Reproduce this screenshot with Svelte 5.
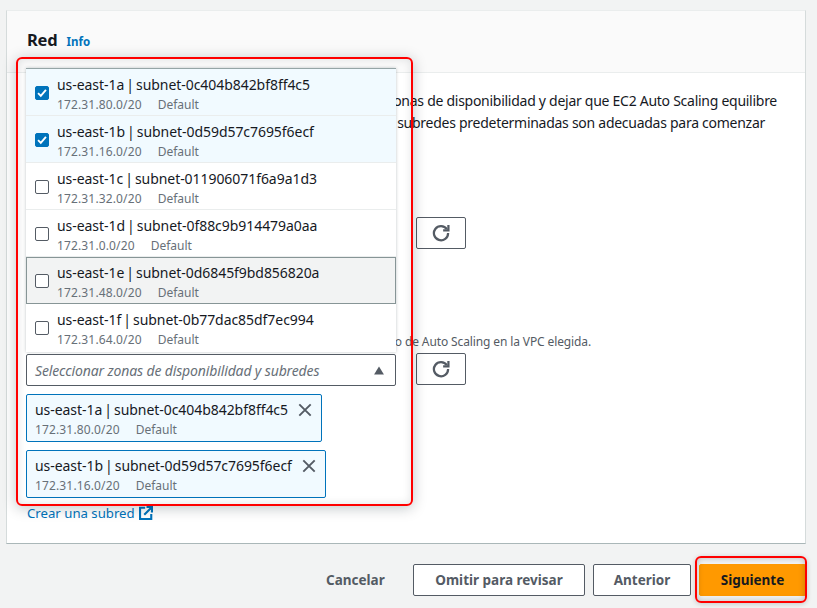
<script>
  const options = [
    { zone: 'us-east-1a', id: 'subnet-0c404b842bf8ff4c5', cidr: '172.31.80.0/20', checked: true },
    { zone: 'us-east-1b', id: 'subnet-0d59d57c7695f6ecf', cidr: '172.31.16.0/20', checked: true },
    { zone: 'us-east-1c', id: 'subnet-011906071f6a9a1d3', cidr: '172.31.32.0/20' },
    { zone: 'us-east-1d', id: 'subnet-0f88c9b914479a0aa', cidr: '172.31.0.0/20' },
    { zone: 'us-east-1e', id: 'subnet-0d6845f9bd856820a', cidr: '172.31.48.0/20', hover: true },
    { zone: 'us-east-1f', id: 'subnet-0b77dac85df7ec994', cidr: '172.31.64.0/20' }
  ];
  const selected = options.filter((o) => o.checked);
</script>

<div class="page">
  <section class="card">
    <header class="head">
      <h2>Red</h2>
      <a class="info" href="#info">Info</a>
    </header>
    <div class="body">
      <p class="line first">zonas de disponibilidad y dejar que EC2 Auto Scaling equilibre</p>
      <p class="line second">las subredes predeterminadas son adecuadas para comenzar</p>
      <div class="refresh-row one">
        <button class="refresh" aria-label="Actualizar">
          <svg viewBox="0 0 16 16" width="18" height="18"><path d="M13.2 4.6A6.3 6.3 0 1 0 14.3 8" fill="none" stroke="#545b64" stroke-width="2"/><path d="M14.6 0.9v4.7H9.9" fill="none" stroke="#545b64" stroke-width="2"/></svg>
        </button>
      </div>
      <p class="hint">grupo de Auto Scaling en la VPC elegida.</p>
      <div class="refresh-row two">
        <button class="refresh" aria-label="Actualizar">
          <svg viewBox="0 0 16 16" width="18" height="18"><path d="M13.2 4.6A6.3 6.3 0 1 0 14.3 8" fill="none" stroke="#545b64" stroke-width="2"/><path d="M14.6 0.9v4.7H9.9" fill="none" stroke="#545b64" stroke-width="2"/></svg>
        </button>
      </div>
      <a class="create" href="#crear">Crear una subred
        <svg viewBox="0 0 16 16" width="14" height="14"><path d="M7 2H1.2v12.8H14V9" fill="none" stroke="#0073bb" stroke-width="2.4"/><path d="M6 10l8-8M8.6 1.2h6.2v6.2" fill="none" stroke="#0073bb" stroke-width="2.4"/></svg>
      </a>
    </div>

    <div class="popover">
      <ul class="list">
        {#each options as o}
          <li class="option" class:checked={o.checked} class:hover={o.hover}>
            <span class="box">
              {#if o.checked}
                <svg viewBox="0 0 14 14" width="12" height="12"><path d="M2.4 7.2l3.2 3.2 6-7" fill="none" stroke="#fff" stroke-width="2.2"/></svg>
              {/if}
            </span>
            <span class="label">
              <span class="name">{o.zone} | {o.id}</span>
              <span class="meta"><span class="cidr">{o.cidr}</span><span>Default</span></span>
            </span>
          </li>
        {/each}
      </ul>
      <div class="select">
        <span>Seleccionar zonas de disponibilidad y subredes</span>
        <svg viewBox="0 0 12 10" width="12" height="9"><path d="M6 0.5L11.5 9.5H0.5z" fill="#545b64"/></svg>
      </div>
      {#each selected as o}
        <div class="token">
          <span class="label">
            <span class="name">{o.zone} | {o.id}</span>
            <span class="meta"><span class="cidr">{o.cidr}</span><span>Default</span></span>
          </span>
          <svg viewBox="0 0 16 16" width="14" height="14"><path d="M1.5 1.5l13 13M14.5 1.5l-13 13" fill="none" stroke="#545b64" stroke-width="2.2"/></svg>
        </div>
      {/each}
    </div>
    <div class="mark"></div>
  </section>

  <footer class="actions">
    <button class="link">Cancelar</button>
    <button class="btn skip">Omitir para revisar</button>
    <button class="btn prev">Anterior</button>
    <button class="primary">Siguiente</button>
  </footer>
</div>

<style>
  :global(body) { margin: 0; background: #f2f3f3; }
  .page {
    width: 817px; height: 608px; box-sizing: border-box; overflow: hidden;
    padding: 10px 11px 0 6px; background: #f2f3f3;
    font-family: "Noto Sans", "Open Sans", sans-serif; font-size: 14px; color: #16191f;
  }
  .card {
    position: relative; height: 534px; box-sizing: border-box; background: #fff;
    border: 1px solid #eaeded; border-left-color: #d5dbdb; border-right-color: #d5dbdb; border-bottom-color: #aab7b8;
  }
  .head {
    display: flex; align-items: baseline; gap: 9px; height: 62px; box-sizing: border-box;
    padding: 17px 20px 0; background: #fafafa; border-bottom: 1px solid #eaeded;
  }
  h2 { margin: 0; font-size: 16.5px; line-height: 24px; font-weight: 700; letter-spacing: -0.2px; }
  .info { color: #0073bb; font-size: 11.5px; font-weight: 700; text-decoration: none; }
  .body { padding-top: 17px; }
  .line { margin: 0; line-height: 22px; white-space: nowrap; text-align: right; font-size: 14px; letter-spacing: -0.27px; }
  .first { padding-right: 28px; }
  .second { padding-right: 40px; }
  .refresh-row { display: flex; padding-left: 409px; }
  .refresh-row.one { margin-top: 83px; }
  .hint { margin: 85px 0 0; padding-right: 214px; text-align: right; white-space: nowrap; font-size: 12px; line-height: 16px; color: #545b64; letter-spacing: -0.12px; }
  .refresh-row.two { margin-top: 3px; }
  .refresh {
    display: flex; align-items: center; justify-content: center; width: 50px; height: 32px; padding: 0;
    background: #fff; border: 1px solid #545b64; border-radius: 2px;
  }
  .create {
    display: inline-flex; align-items: center; gap: 4px; margin: 119px 0 0 20px;
    color: #0073bb; font-size: 13.2px; line-height: 18px; text-decoration: none;
  }
  .popover { position: absolute; left: 19px; top: 57px; width: 370px; }
  .list {
    list-style: none; margin: 0; padding: 0; background: #fff; box-sizing: border-box;
    border-top: 1px solid #95a5a6; height: 284px;
    box-shadow: 0 0 3px rgba(0, 28, 36, 0.25);
  }
  .option {
    display: flex; align-items: flex-start; gap: 8px; height: 47px; box-sizing: border-box;
    padding: 6px 9px 0; border-bottom: 1px solid #eaeded;
  }
  .option:last-child { border-bottom: 0; }
  .option.checked { background: #f1faff; }
  .option.hover { background: #f2f3f3; border: 1px solid #879596; padding: 5px 8px 0; }
  .box {
    display: flex; align-items: center; justify-content: center; width: 14px; height: 14px; flex: none;
    box-sizing: border-box; margin-top: 11px;
    background: #fff; border: 1px solid #545b64; border-radius: 2px;
  }
  .checked .box { background: #0073bb; border-color: #0073bb; }
  .label { display: flex; flex-direction: column; min-width: 0; }
  .name { font-size: 14px; line-height: 19px; white-space: nowrap; letter-spacing: -0.055px; word-spacing: -1.5px; }
  .meta { display: flex; gap: 16px; margin-top: 1px; font-size: 12px; line-height: 19px; color: #687078; }
  .cidr { letter-spacing: 0.14px; }
  .select {
    display: flex; align-items: center; justify-content: space-between; height: 32px; margin-top: 2px;
    box-sizing: border-box; padding: 0 10px 0 8px; background: #fff; letter-spacing: -0.14px;
    border: 1px solid #545b64; border-radius: 2px; font-style: italic; color: #687078;
  }
  .token {
    display: flex; align-items: flex-start; justify-content: space-between; gap: 10px; width: fit-content;
    box-sizing: border-box; height: 48px; margin-top: 8px; padding: 5px 9px 0 8px;
    background: #f1faff; border: 1px solid #0073bb; border-radius: 2px;
  }
  .token svg { margin-top: 3px; }
  .mark {
    position: absolute; left: 9px; top: 46px; width: 397px; height: 449px; box-sizing: border-box;
    border: 2px solid #f00; border-radius: 6px; pointer-events: none;
    box-shadow: 0 2px 14px rgba(0, 28, 36, 0.25), inset 0 0 8px rgba(0, 28, 36, 0.12);
  }
  .actions { display: flex; align-items: center; height: 32px; margin-top: 20px; font-weight: 700; color: #545b64; }
  .actions button { font: inherit; font-size: 13.5px; height: 32px; padding: 0; box-sizing: border-box; }
  .link { width: 58px; margin-left: 320px; background: none; border: 0; color: #545b64; }
  .btn { background: #fff; border: 1px solid #545b64; border-radius: 2px; color: #545b64; }
  .skip { width: 172px; margin-left: 29px; }
  .prev { width: 98px; margin-left: 8px; }
  .primary {
    position: relative; width: 107px; margin-left: 8px; background: #f90; border: 1px solid #f90; border-radius: 2px; color: #16191f;
  }
  .primary::after {
    content: ""; position: absolute; left: -5px; top: -9px; right: -2px; bottom: -8px;
    border: 2px solid #f00; border-radius: 6px; box-shadow: 0 1px 5px rgba(0, 28, 36, 0.2), inset 0 0 6px rgba(0, 28, 36, 0.25);
  }
</style>
